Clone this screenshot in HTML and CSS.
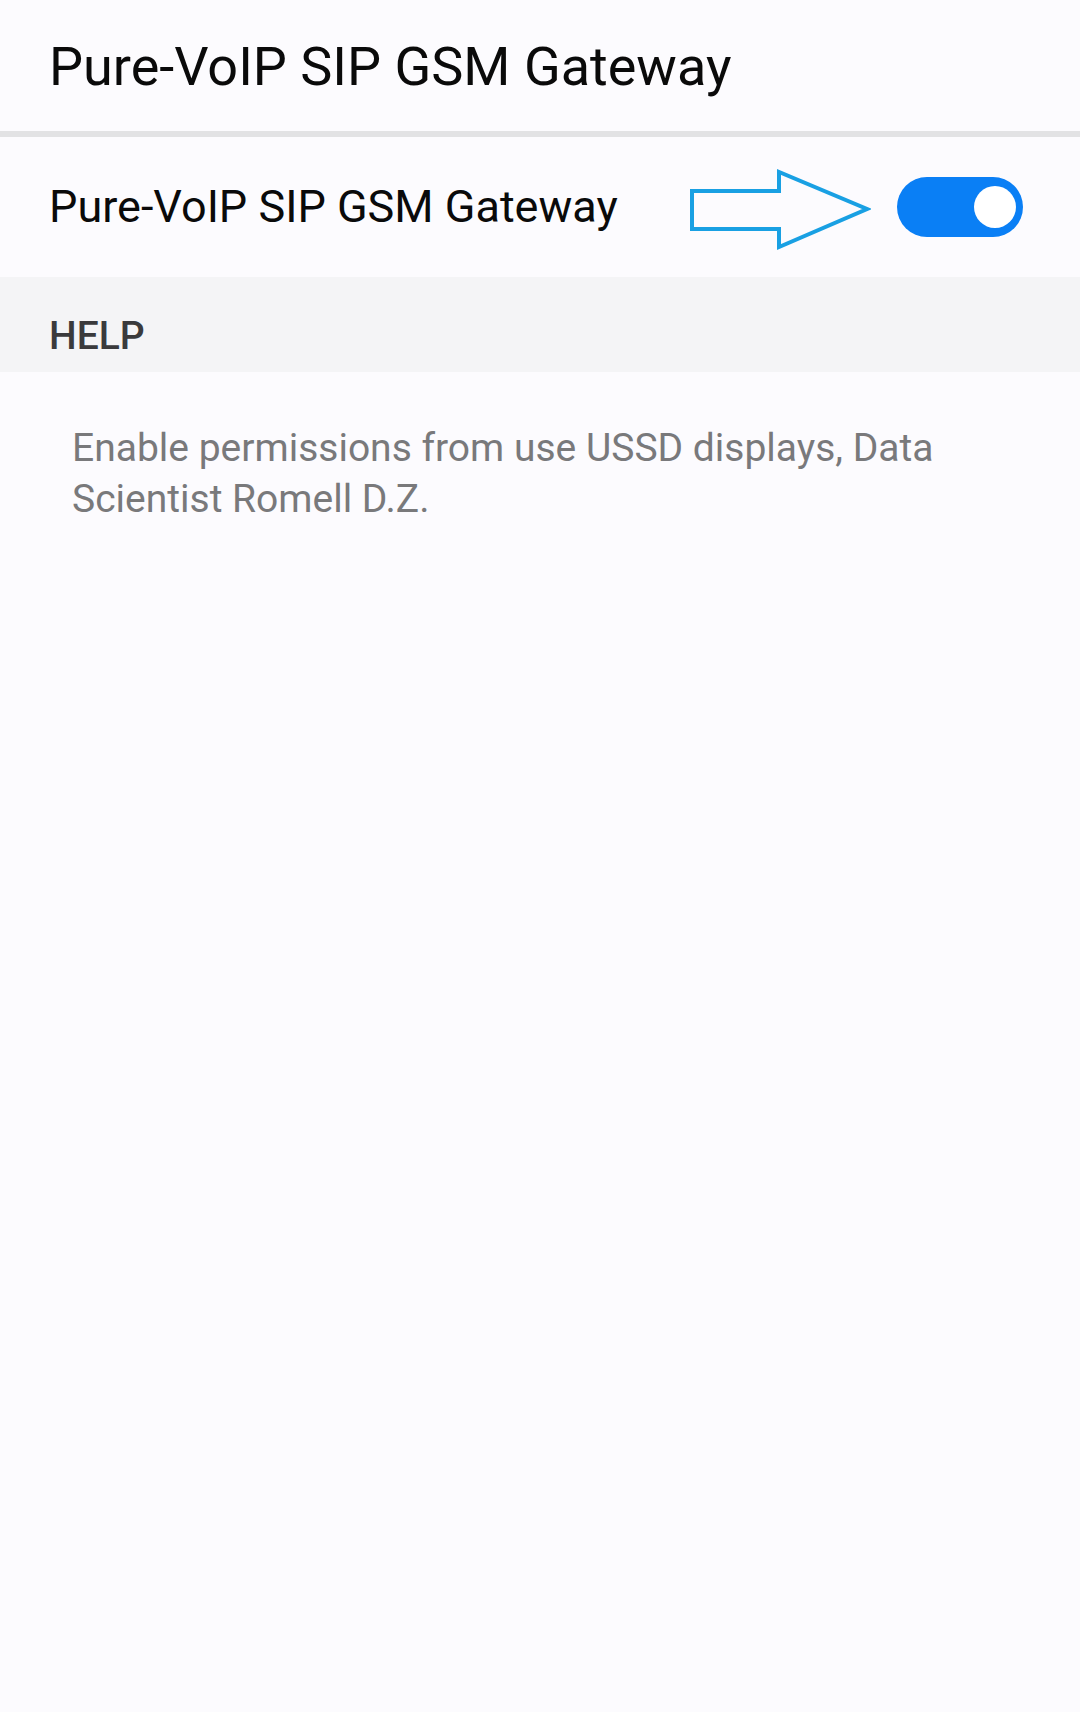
FILE: index.html
```html
<!DOCTYPE html>
<html lang="en">
<head>
<meta charset="utf-8">
<title>Pure-VoIP SIP GSM Gateway</title>
<link rel="stylesheet" href="styles.css">
</head>
<body>
<header class="appbar">
  <h1 class="appbar-title">Pure-VoIP SIP GSM Gateway</h1>
</header>
<div class="divider"></div>
<section class="setting-row">
  <span class="setting-label">Pure-VoIP SIP GSM Gateway</span>
  <svg class="hint-arrow" width="183" height="83" viewBox="0 0 183 83" aria-hidden="true">
    <polygon points="4,23 91,23 91,4 179,41 91,79 91,61 4,61" fill="none" stroke="#19a0e3" stroke-width="4" stroke-linejoin="miter"/>
  </svg>
  <div class="switch on" role="switch" aria-checked="true">
    <div class="switch-knob"></div>
  </div>
</section>
<div class="section-header">HELP</div>
<p class="help-text">Enable permissions from use USSD displays, Data Scientist Romell D.Z.</p>
</body>
</html>
```

FILE: styles.css
```css
html, body {
  margin: 0;
  padding: 0;
}
body {
  background: #fcfbfe;
  font-family: Roboto, "Noto Sans", "Liberation Sans", sans-serif;
  width: 1080px;
  min-height: 1712px;
}
.appbar {
  height: 131px;
  box-sizing: border-box;
  padding: 35px 0 0 49px;
}
.appbar-title {
  margin: 0;
  font-size: 54px;
  font-weight: 400;
  line-height: 64px;
  color: #0a0a0a;
}
.divider {
  height: 6px;
  background: #e2e2e4;
}
.setting-row {
  height: 140px;
  box-sizing: border-box;
  display: flex;
  align-items: center;
  padding: 0 57px 0 49px;
}
.setting-label {
  font-size: 45px;
  line-height: 52px;
  color: #0a0a0a;
}
.hint-arrow {
  margin-left: auto;
  margin-top: 5px;
  flex: none;
}
.switch {
  flex: none;
  width: 126px;
  height: 60px;
  margin-left: 26px;
  border-radius: 30px;
  background: #0a7ff5;
  box-sizing: border-box;
  display: flex;
  align-items: center;
  justify-content: flex-end;
  padding-right: 7px;
}
.switch-knob {
  width: 42px;
  height: 42px;
  border-radius: 50%;
  background: #ffffff;
}
.section-header {
  height: 95px;
  box-sizing: border-box;
  padding: 36px 0 0 49px;
  background: #f4f4f6;
  font-size: 39px;
  font-weight: 500;
  line-height: 46px;
  color: #3a3a3c;
}
.help-text {
  margin: 0;
  padding: 51px 60px 0 72px;
  font-size: 39px;
  line-height: 51px;
  color: #79797b;
}
```
